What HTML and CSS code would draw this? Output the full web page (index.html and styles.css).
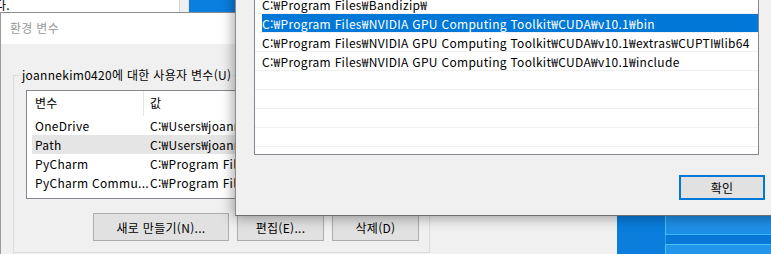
FILE: index.html
```html
<!DOCTYPE html>
<html lang="ko">
<head>
    <meta charset="UTF-8">
    <title>환경 변수</title>
    <link rel="stylesheet" href="styles.css">
</head>
<body>
    <div class="desktop">
        <div class="wallpaper">
            <div class="pane pane-dark"></div>
            <div class="pane pane-top"></div>
            <div class="pane pane-band"></div>
            <div class="pane pane-bottom"></div>
        </div>

        <div class="window back-window">
            <div class="back-content"><span class="back-text">다.</span></div>
            <div class="back-scroll"></div>
        </div>

        <section class="window env-dialog">
            <header class="title-bar">환경 변수</header>
            <div class="env-body">
                <fieldset class="group">
                    <legend>joannekim0420에 대한 사용자 변수(U)</legend>
                    <div class="list-view">
                        <div class="lv-head">
                            <span class="head-name">변수</span>
                            <span class="head-value">값</span>
                        </div>
                        <div class="lv-row">
                            <span class="col-name">OneDrive</span>
                            <span class="col-value">C:₩Users₩joannekim0420₩OneDrive</span>
                        </div>
                        <div class="lv-row selected">
                            <span class="col-name">Path</span>
                            <span class="col-value">C:₩Users₩joannekim0420₩AppData₩Local₩Programs</span>
                        </div>
                        <div class="lv-row">
                            <span class="col-name">PyCharm</span>
                            <span class="col-value">C:₩Program Files₩JetBrains₩PyCharm 2019.3₩bin;</span>
                        </div>
                        <div class="lv-row">
                            <span class="col-name">PyCharm Commu...</span>
                            <span class="col-value">C:₩Program Files₩JetBrains₩PyCharm Community</span>
                        </div>
                    </div>
                    <div class="button-row">
                        <button class="btn btn-wide">새로 만들기(N)...</button>
                        <button class="btn">편집(E)...</button>
                        <button class="btn">삭제(D)</button>
                    </div>
                </fieldset>
            </div>
        </section>

        <section class="window edit-dialog">
            <ul class="path-list">
                <li>%USERPROFILE%₩AppData₩Local₩Microsoft₩WindowsApps</li>
                <li>C:₩Users₩joannekim0420₩AppData₩Local₩Programs₩Python₩Python37</li>
                <li>C:₩Program Files₩JetBrains₩PyCharm Community Edition 2019.3₩bin</li>
                <li>C:₩Program Files₩Bandizip₩</li>
                <li class="selected">C:₩Program Files₩NVIDIA GPU Computing Toolkit₩CUDA₩v10.1₩bin</li>
                <li>C:₩Program Files₩NVIDIA GPU Computing Toolkit₩CUDA₩v10.1₩extras₩CUPTI₩lib64</li>
                <li>C:₩Program Files₩NVIDIA GPU Computing Toolkit₩CUDA₩v10.1₩include</li>
                <li></li>
                <li></li>
                <li></li>
                <li></li>
            </ul>
            <div class="dialog-actions">
                <button class="btn btn-default">확인</button>
            </div>
        </section>
    </div>
</body>
</html>
```

FILE: styles.css
```css
*{
    box-sizing: border-box;
}
body{
    margin: 0;
    font-family: "Noto Sans CJK KR", "Noto Sans", sans-serif;
    font-size: 12px;
    letter-spacing: 0.3px;
    color: #000;
}
.desktop{
    position: relative;
    width: 771px;
    height: 254px;
    overflow: hidden;
    background-color: #0a7fdf;
}

/* wallpaper seen at the bottom right */
.wallpaper{
    position: absolute;
    left: 617px;
    top: 215px;
    width: 154px;
    height: 39px;
    display: grid;
    grid-template-columns: 48px 1fr;
    grid-template-rows: 20px 9px 1fr;
}
.pane-dark{
    grid-row: 1 / 4;
    background-color: #0a7ddd;
}
.pane-top{
    background-color: #1e8fe8;
    border-left: 1px solid #47c4f4;
    border-bottom: 1px solid #3ab8f0;
}
.pane-band{
    background-color: #0877d8;
    border-left: 1px solid #2aa6ea;
}
.pane-bottom{
    background-color: #2395eb;
    border-left: 1px solid #47c4f4;
    border-top: 1px solid #47c4f4;
}

.window{
    position: absolute;
}
.back-window{
    left: -20px;
    top: -60px;
    width: 209px;
    height: 120px;
    display: flex;
    background-color: #fff;
}
.back-content{
    flex: 1;
    display: flex;
    align-items: flex-end;
    padding-bottom: 48px;
}
.back-text{
    margin-left: 15px;
    line-height: 14px;
}
.back-scroll{
    width: 10px;
    background-color: #f0f0f0;
    border-left: 1px solid #d4d4d4;
    border-right: 1px solid #e3e3e3;
}

/* environment variables dialog */
.env-dialog{
    left: 0;
    top: 12px;
    width: 617px;
    height: 260px;
    background-color: #f0f0f0;
    border-top: 1px solid #8c8c8c;
    border-left: 1px solid #9a9a9a;
}
.title-bar{
    height: 31px;
    background-color: #fff;
    color: #999;
    padding-left: 9px;
    line-height: 29px;
}
.env-body{
    padding: 23px 0 0 12px;
}
.group{
    margin: 0;
    width: 417px;
    height: 186px;
    padding: 0 0 0 6px;
    border: 1px solid #dcdcdc;
}
.group legend{
    padding: 0 2px;
    line-height: 16px;
}
.list-view{
    margin: 7px 0 0 6px;
    width: 390px;
    height: 109px;
    background-color: #fff;
    border: 1px solid #828790;
}
.lv-head{
    display: flex;
    height: 25px;
    line-height: 24px;
}
.head-name{
    flex-shrink: 0;
    width: 117px;
    padding-left: 8px;
    border-right: 1px solid #e5e5e5;
}
.head-value{
    padding-left: 6px;
}
.lv-row{
    display: flex;
    height: 19px;
    line-height: 19px;
    margin-left: 5px;
    white-space: nowrap;
}
.lv-row.selected{
    background-color: #e5e5e5;
}
.col-name{
    flex-shrink: 0;
    width: 118px;
    padding-left: 3px;
}
.button-row{
    display: flex;
    gap: 8px;
    margin: 14px 0 0 73px;
}
.btn{
    font-family: inherit;
    font-size: 12px;
    letter-spacing: 0.3px;
    color: #000;
    width: 87px;
    height: 28px;
    padding: 0;
    background-color: #e1e1e1;
    border: 1px solid #adadad;
}
.btn-wide{
    width: 136px;
}

/* edit environment variable dialog */
.edit-dialog{
    left: 235px;
    top: -80px;
    width: 560px;
    height: 296px;
    background-color: #f0f0f0;
    border-left: 1px solid #8a8a8a;
    border-bottom: 1px solid #6e6e6e;
    box-shadow: -2px 2px 12px rgba(0, 0, 0, 0.35);
}
.path-list{
    list-style: none;
    margin: 17px 0 0 18px;
    padding: 0 0 7px;
    width: 505px;
    background-color: #fff;
    border: 1px solid #828790;
}
.path-list li{
    height: 19px;
    line-height: 19px;
    padding-left: 7px;
    border-bottom: 1px solid #f0f0f0;
    white-space: nowrap;
}
.path-list li.selected{
    background-color: #0078d7;
    background-clip: content-box;
    padding-left: 3px;
    margin-left: 4px;
    color: #fff;
}
.dialog-actions{
    display: flex;
    justify-content: flex-end;
    width: 529px;
    margin-top: 20px;
}
.btn-default{
    width: 86px;
    height: 25px;
    border: 2px solid #0078d7;
}
```
